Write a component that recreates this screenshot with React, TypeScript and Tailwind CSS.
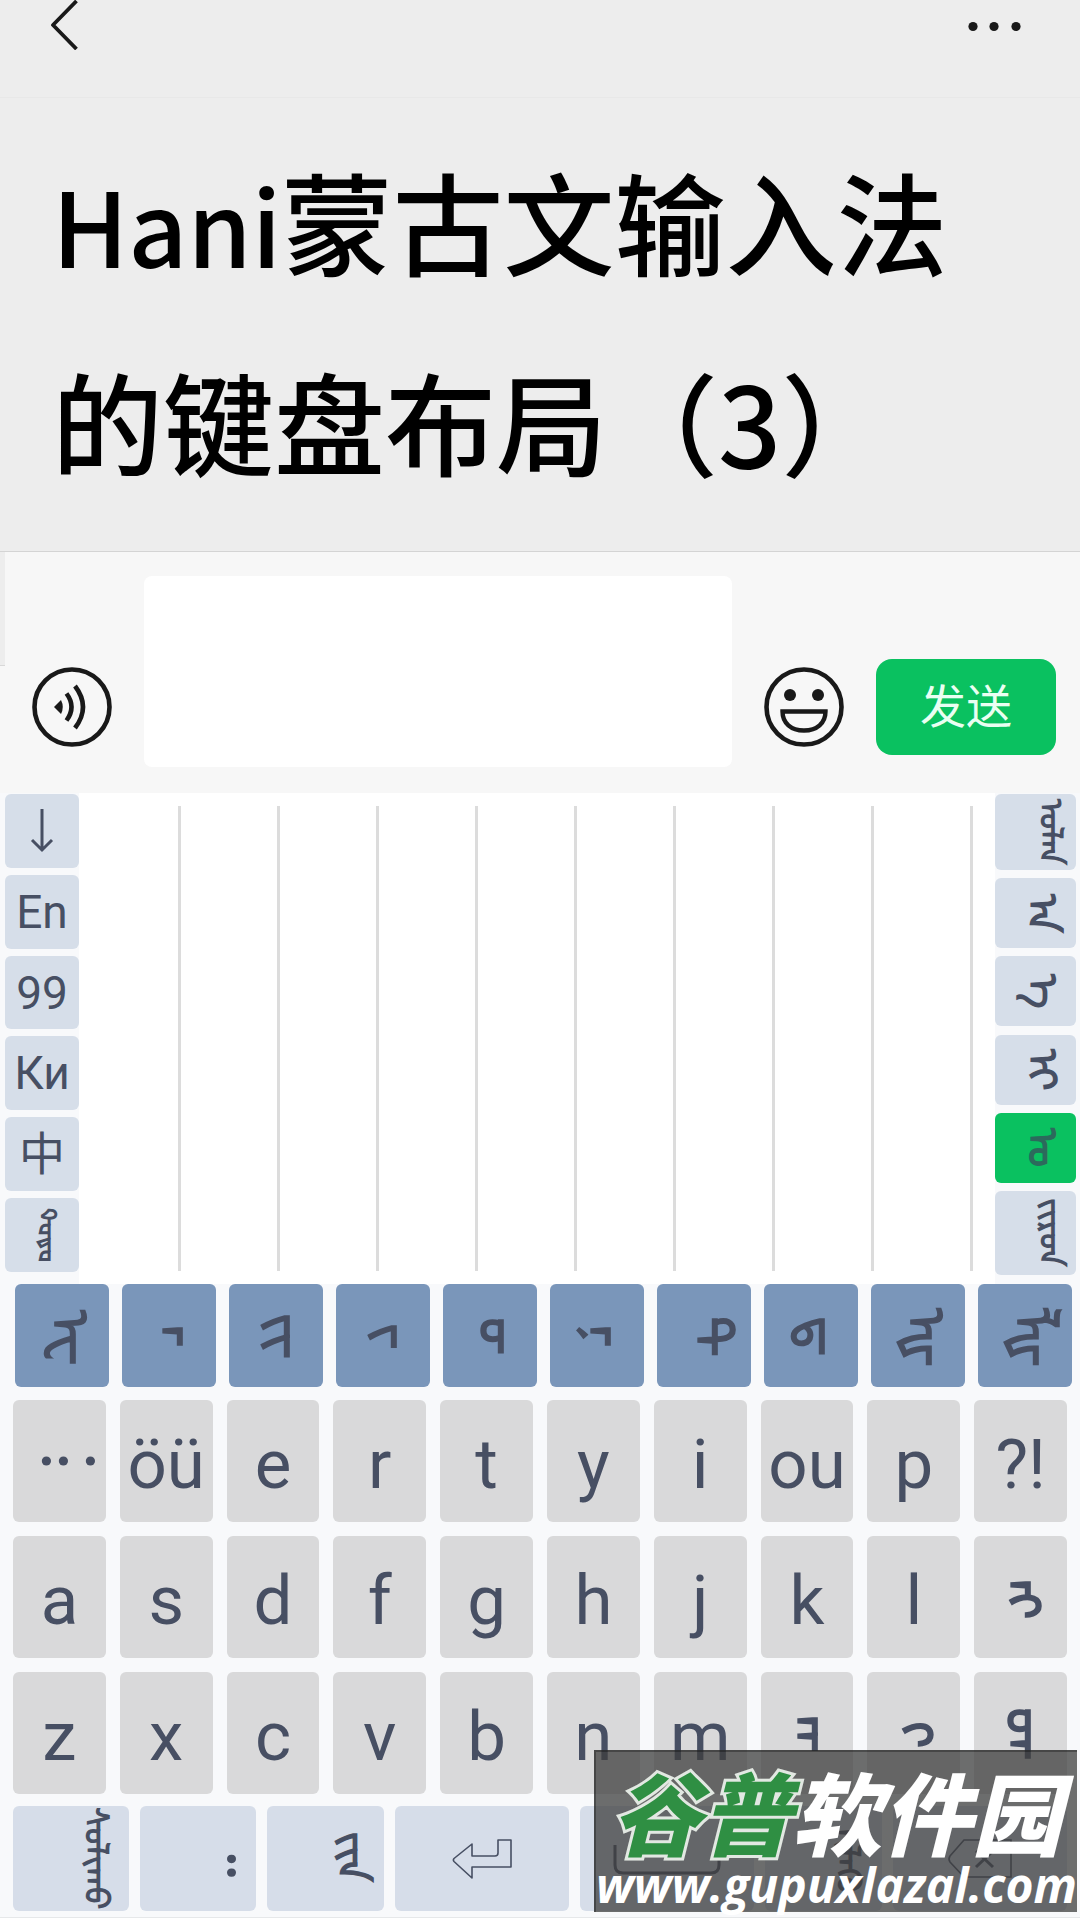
import type { ReactNode } from 'react';

// Zero-width joiner and variation selector pick the joined forms of Mongolian letters.
const J = '\u200d';
const V1 = '\u180b';

type Key = { name: string; latin?: string; mongol?: string; icon?: ReactNode };

function Mongol({ children, size }: { children: string; size: string }) {
  return (
    <span
      lang="mn-Mong"
      className={`whitespace-nowrap font-bold leading-none [writing-mode:vertical-lr] font-['Noto_Sans_Mongolian','Noto_Sans',sans-serif] ${size}`}
    >
      {children}
    </span>
  );
}

const EllipsisMark = () => (
  <svg viewBox="0 0 92 20" className="h-5 w-full" fill="currentColor" aria-hidden="true">
    <circle cx="33" cy="10" r="4.6" />
    <circle cx="50" cy="10" r="4.6" />
    <circle cx="77" cy="10" r="4.6" />
  </svg>
);

const ReturnIcon = () => (
  <svg width="60" height="40" viewBox="0 0 60 40" fill="none" stroke="currentColor" strokeWidth="1.6" strokeLinejoin="round" aria-hidden="true">
    <path d="M59 1V28H20V39L2 22.5Q0.8 21 2 19.5L20 5V17H43Q46 17 46 14V1Z" />
  </svg>
);

const SpaceIcon = () => (
  <svg width="108" height="32" viewBox="0 0 108 32" fill="none" stroke="currentColor" strokeWidth="3" aria-hidden="true">
    <path d="M2 2V22Q2 30 10 30H98Q106 30 106 22V2" />
  </svg>
);

const BackspaceIcon = () => (
  <svg width="66" height="40" viewBox="0 0 66 40" fill="none" stroke="currentColor" strokeWidth="1.6" aria-hidden="true">
    <path d="M17 1H64V38H17L3 23Q1 20 3 17Z" />
    <path d="M29 12L46 28M46 12L29 28" strokeWidth="3" />
  </svg>
);

const DownIcon = () => (
  <svg width="24" height="46" viewBox="0 0 24 46" fill="none" stroke="currentColor" strokeWidth="3" aria-hidden="true">
    <path d="M12 1V42M2 32L12 42L22 32" />
  </svg>
);

const leftKeys: Key[] = [
  { name: 'Hide keyboard', icon: <DownIcon /> },
  { name: 'English', latin: 'En' },
  { name: 'Numbers', latin: '99' },
  { name: 'Cyrillic', latin: 'Ки' },
  { name: 'Chinese', latin: '中' },
  { name: 'Todo', mongol: 'ᡐᡆᡑᡆ' },
];

const rightKeys = [
  { name: 'ulan', text: 'ᠤᠯᠠᠨ', box: 'h-[76px] pl-12', size: 'text-[32px]', on: false },
  { name: 'a', text: 'ᠠ', box: 'h-[70px] pl-9', size: 'text-[42px]', on: false },
  { name: 'e', text: 'ᠡ', box: 'h-[70px] pl-9', size: 'text-[42px]', on: false },
  { name: 'i', text: 'ᠢ', box: 'h-[70px] pl-9', size: 'text-[42px]', on: false },
  { name: 'o', text: 'ᠣ', box: 'h-[70px] pl-9', size: 'text-[42px]', on: true },
  { name: 'yiron', text: J + 'ᠢᠢᠷᠤᠨ', box: 'h-[84px] pl-12', size: 'text-[32px]', on: false },
];

const suggestions = [
  'ᠧ' + J,
  J + 'ᠠ' + J,
  J + 'ᠢᠢ' + J,
  J + 'ᠢ' + J,
  J + 'ᠣ' + J,
  J + 'ᠨ' + V1 + J,
  J + 'ᠲ' + V1 + J,
  J + 'ᠳ' + V1 + J,
  'ᠾ' + J,
  'ᡀ' + J,
];

const rows: Key[][] = [
  [
    { name: 'Ellipsis', icon: <EllipsisMark /> },
    ...['öü', 'e', 'r', 't', 'y', 'i', 'ou', 'p', '?!'].map((c) => ({ name: c, latin: c })),
  ],
  [
    ...['a', 's', 'd', 'f', 'g', 'h', 'j', 'k', 'l'].map((c) => ({ name: c, latin: c })),
    { name: 'ng', mongol: J + 'ᠩ' + J },
  ],
  [
    ...['z', 'x', 'c', 'v', 'b', 'n', 'm'].map((c) => ({ name: c, latin: c })),
    { name: 'aa', mongol: J + 'ᠠᠠ' + J },
    { name: 'h', mongol: J + 'ᠬ' + J },
    { name: 'd', mongol: J + 'ᠳ' + J },
  ],
];

const bottomKeys: (Key & { size?: string })[] = [
  { name: 'Switch', mongol: 'ᠰᠣᠯᠢᠬᠤ', size: 'text-[33px]' },
  { name: 'Full stop', mongol: '᠃', size: 'text-[54px]' },
  { name: 'yin', mongol: J + 'ᠢᠢᠨ', size: 'text-[42px]' },
  { name: 'Return', icon: <ReturnIcon /> },
  { name: 'Space', icon: <SpaceIcon /> },
  { name: 'ilegu', mongol: 'ᠢᠯᠡᠭᠦ', size: 'text-[33px]' },
  { name: 'Backspace', icon: <BackspaceIcon /> },
];

const softKey = 'flex items-center rounded-md';

export default function App() {
  return (
    <div className="relative w-full bg-[#f8f9fb] font-[Roboto,'Noto_Sans_CJK_SC',sans-serif] text-[#474f63]">
      <header className="flex h-[98px] items-start justify-between border-b border-[#e8e8e8] bg-[#ededed] pl-[50px] pr-[58px] text-[#191919]">
        <button type="button" aria-label="Back">
          <svg width="30" height="50" viewBox="0 0 30 50" fill="none" stroke="currentColor" strokeWidth="3.8" className="block">
            <path d="M26.500 1L3 25L26.500 49" strokeLinejoin="round" />
          </svg>
        </button>
        <button type="button" aria-label="More" className="pt-4">
          <svg width="56" height="20" viewBox="0 0 56 20" fill="currentColor" className="block">
            <circle cx="7" cy="10.500" r="4.600" />
            <circle cx="28" cy="10.500" r="4.600" />
            <circle cx="50" cy="10.500" r="4.600" />
          </svg>
        </button>
      </header>

      <main>
        <section className="bg-[#ededed] px-[52px] pb-[31px] pt-[22px]">
          <h1 className="font-['Noto_Sans_CJK_SC',sans-serif] text-[111px] font-medium leading-[200px] text-black">
            <span className="text-[103px] leading-none">Hani</span>蒙古文输入法
            <br />
            的键盘布局（3）
          </h1>
        </section>

        <form className="flex items-end border-t border-[#d4d4d4] bg-[#f7f7f7] pr-6" onSubmit={(e) => e.preventDefault()}>
          <div className="h-[114px] w-[5px] self-start border-b border-[#d8d8d8] bg-[#ededed]" />
          <button type="button" aria-label="Voice" className="mb-[46px] ml-[27px] text-[#191919]">
            <svg width="80" height="80" viewBox="0 0 80 80" fill="none" stroke="currentColor" className="block">
              <circle cx="40" cy="40" r="37.500" strokeWidth="4.600" />
              <path d="M22 40L29 33Q32.500 40 29 47Z" fill="currentColor" stroke="none" />
              <path d="M34.500 26.500Q44.500 40 34.500 53.500" strokeWidth="4.600" />
              <path d="M43 19Q59 40 43 61" strokeWidth="4.600" />
            </svg>
          </button>
          <textarea aria-label="Message" className="mb-[26px] ml-8 mt-6 block h-[191px] min-w-0 flex-1 resize-none rounded-lg bg-white p-4 text-4xl outline-none" />
          <button type="button" aria-label="Emoji" className="mb-[46px] ml-8 text-[#191919]">
            <svg width="80" height="80" viewBox="0 0 80 80" fill="none" stroke="currentColor" className="block">
              <circle cx="40" cy="40" r="37.500" strokeWidth="4.600" />
              <circle cx="26" cy="28" r="6" fill="currentColor" stroke="none" />
              <circle cx="54" cy="28" r="6" fill="currentColor" stroke="none" />
              <path d="M18.500 44.500H61.500C61.500 56 53 63.500 40 63.500S18.500 56 18.500 44.500Z" strokeWidth="4.400" />
            </svg>
          </button>
          <button type="submit" className="mb-[38px] ml-8 h-24 w-[180px] rounded-2xl bg-[#0ac160] text-[46px] leading-none text-[#e9fff2]">
            发送
          </button>
        </form>

        <section aria-label="Candidates" className="flex h-[491px]">
          <div className="flex w-[79px] flex-col gap-[7px] pb-3 pl-[5px] pt-px">
            {leftKeys.map((k) => (
              <button
                key={k.name}
                type="button"
                aria-label={k.name}
                className={`${softKey} min-h-0 flex-1 bg-[#d6dee9] text-[46px] leading-none ${k.mongol ? 'pl-9' : 'justify-center'}`}
              >
                {k.icon}
                {k.latin}
                {k.mongol && <Mongol size="text-[25px]">{k.mongol}</Mongol>}
              </button>
            ))}
          </div>
          <div className="flex-1 bg-white py-[13px] pl-[3px] pr-[22px]">
            <div className="grid h-full grid-cols-9">
              {Array.from({ length: 9 }, (_, i) => (
                <div key={i} className="border-r-[3px] border-[#dcdcdc]" />
              ))}
            </div>
          </div>
          <div className="flex w-[85px] flex-col justify-between pb-[9px] pr-1 pt-px">
            {rightKeys.map((k) => (
              <button
                key={k.name}
                type="button"
                aria-label={k.name}
                className={`${softKey} ${k.box} ${k.on ? 'bg-[#0ac160] text-[#2c6a5c]' : 'bg-[#d6dee9]'}`}
              >
                <Mongol size={k.size}>{k.text}</Mongol>
              </button>
            ))}
          </div>
        </section>

        <section aria-label="Keyboard" className="flex flex-col border-b border-[#e6e8ea] pb-1.5">
          <div className="grid grid-cols-10 gap-[13px] pl-[15px] pr-2">
            {suggestions.map((s, i) => (
              <button key={i} type="button" className={`${softKey} h-[103px] min-w-0 bg-[#7a96ba] pl-10`}>
                <Mongol size="text-[54px]">{s}</Mongol>
              </button>
            ))}
          </div>
          <div className="flex flex-col gap-[14px] px-[13px] pb-3 pt-[13px]">
            {rows.map((row, r) => (
              <div key={r} className="grid grid-cols-10 gap-[14px]">
                {row.map((k) => (
                  <button
                    key={k.name}
                    type="button"
                    aria-label={k.name}
                    className={`${softKey} h-[122px] min-w-0 bg-[#d9d9da] text-[69px] leading-none ${k.mongol ? 'pl-9' : 'justify-center'}`}
                  >
                    {k.icon}
                    {k.latin && <span className="pt-1.5">{k.latin}</span>}
                    {k.mongol && <Mongol size="text-[54px]">{k.mongol}</Mongol>}
                  </button>
                ))}
              </div>
            ))}
          </div>
          <div className="grid grid-cols-[2fr_2fr_2fr_3fr_3fr_2fr_3fr] gap-[11px] px-[13px]">
            {bottomKeys.map((k) => (
              <button
                key={k.name}
                type="button"
                aria-label={k.name}
                className={`${softKey} h-[105px] min-w-0 bg-[#d6dde9] ${k.mongol ? 'pl-[74px]' : 'justify-center'}`}
              >
                {k.icon}
                {k.mongol && <Mongol size={k.size ?? ''}>{k.mongol}</Mongol>}
              </button>
            ))}
          </div>
        </section>
      </main>

      <aside className="absolute bottom-1.5 right-[3px] flex h-[162px] w-[483px] flex-col items-center border-l-2 border-t-2 border-black/30 bg-[#3d3d3d]/75 pt-2 text-white">
        <p className="whitespace-nowrap font-['Noto_Sans_CJK_SC',sans-serif] text-[90px] font-black italic leading-[100px]">
          <span className="text-[#2f8f43] [-webkit-text-stroke:6px_#e2e8e2] [paint-order:stroke_fill]">谷普</span>软件园
        </p>
        <a href="http://www.gupuxlazal.com" className="whitespace-nowrap font-['Open_Sans',sans-serif] text-[48px] font-bold italic leading-[50px]">
          www.gupuxlazal.com
        </a>
      </aside>
    </div>
  );
}
